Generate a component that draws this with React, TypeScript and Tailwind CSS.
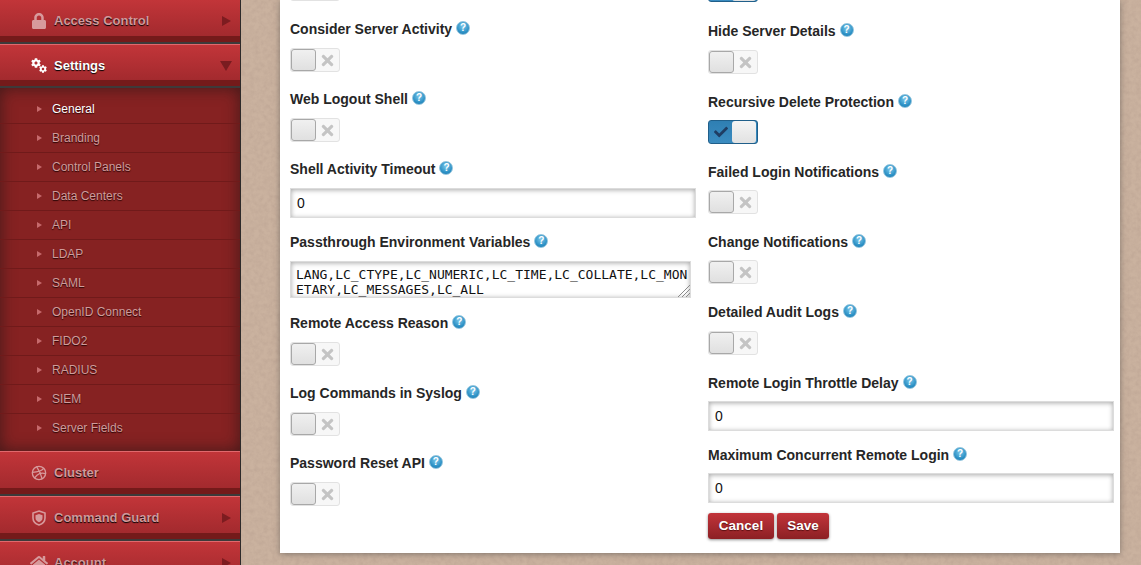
import { FaCheck, FaCog, FaHome, FaLock, FaTimes } from "react-icons/fa";
import { FiDribbble } from "react-icons/fi";

const subItems = [
  "General",
  "Branding",
  "Control Panels",
  "Data Centers",
  "API",
  "LDAP",
  "SAML",
  "OpenID Connect",
  "FIDO2",
  "RADIUS",
  "SIEM",
  "Server Fields",
];

function NavHeader({
  icon,
  label,
  open,
  arrow = true,
}: {
  icon: React.ReactNode;
  label: string;
  open?: boolean;
  arrow?: boolean;
}) {
  return (
    <div
      className={`shrink-0 border-t border-[#e0696d] border-b-2 border-b-[#3d3a3a] bg-[linear-gradient(#c23539,#a32a2e_85%,#741a1a_85%)] flex items-center ${open ? "h-[44px]" : "h-[45px] pb-[1px]"}`}
    >
      <div
        className={`w-[18px] ml-[30px] h-[20px] flex items-center justify-center ${open ? "text-white" : "text-[#d79a9c]"}`}
      >
        {icon}
      </div>
      <span
        className={`ml-[6px] text-[13px] font-bold [text-shadow:0_1px_1px_#000] ${open ? "text-white" : "text-[#d0999b]"}`}
      >
        {label}
      </span>
      {arrow && (
        <span className="ml-auto mr-[9px]">
          {open ? (
            <span className="block mr-[-1px] w-0 h-0 border-x-[6px] border-x-transparent border-t-[10px] border-t-[#7a1c20]" />
          ) : (
            <span className="block w-0 h-0 border-y-[5px] border-y-transparent border-l-[9px] border-l-[#7d1c20]" />
          )}
        </span>
      )}
    </div>
  );
}

function ShieldIcon() {
  return (
    <svg width="14" height="16" viewBox="0 0 14 16" fill="none">
      <path d="M7 1 L13 3 V8 C13 11.5 10 14 7 15 C4 14 1 11.5 1 8 V3 Z" stroke="currentColor" strokeWidth="1.6" />
      <path d="M7 4 L10.5 5.2 V8 C10.5 10 9 11.5 7 12.3 C5 11.5 3.5 10 3.5 8 V5.2 Z" fill="currentColor" />
    </svg>
  );
}

function Sidebar() {
  return (
    <div className="relative z-10 w-[241px] shrink-0 h-[566px] overflow-hidden border-r border-[#2d2a2a] flex flex-col mt-[-1px]">
      <NavHeader label="Access Control" icon={<FaLock size={16} />} />
      <NavHeader
        label="Settings"
        open
        icon={
          <span className="flex w-[16px] h-[15px]">
            <FaCog size={10} className="self-start" />
            <FaCog size={8} className="self-end ml-[-2px]" />
          </span>
        }
      />
      <div className="shrink-0 h-[363px] pt-[7px] bg-[#862222] shadow-[inset_0_0_16px_rgba(20,20,20,0.6)]">
        {subItems.map((item, i) => (
          <div
            key={item}
            className={`h-[29px] flex items-center pl-[37px] border-b ${i < subItems.length - 1 ? "border-[#701a1a]" : "border-transparent"}`}
          >
            <span className="w-0 h-0 border-y-[3px] border-y-transparent border-l-[5px] border-l-[#c66a6c]" />
            <span
              className={`ml-[10px] text-[12px] [text-shadow:0_1px_1px_#2a0505] ${i === 0 ? "text-white" : "text-[#cf9c9c]"}`}
            >
              {item}
            </span>
          </div>
        ))}
      </div>
      <NavHeader label="Cluster" arrow={false} icon={<FiDribbble size={16} />} />
      <NavHeader label="Command Guard" icon={<ShieldIcon />} />
      <NavHeader label="Account" icon={<FaHome size={18} />} />
    </div>
  );
}

function Help() {
  return (
    <span className="ml-[4px] w-[14px] h-[14px] mt-[-3px] rounded-full bg-[radial-gradient(circle_at_50%_35%,#7cc8ea,#2a8fc4_65%,#1a6fa5)] border border-[#8fc3dd] inline-flex items-center justify-center text-[10px] leading-none font-bold text-white">
      ?
    </span>
  );
}

function Label({ text, className = "mb-[9px]" }: { text: string; className?: string }) {
  return (
    <div className={`h-[20px] flex items-center text-[14px] font-bold text-[#262626] ${className}`}>
      {text}
      <Help />
    </div>
  );
}

function Toggle({ on, className = "" }: { on?: boolean; className?: string }) {
  if (on) {
    return (
      <div
        className={`w-[50px] h-[24px] rounded-[3px] border border-[#205f8a] bg-[linear-gradient(#2f7fb3,#3b8cc0)] flex items-center p-[1px] ${className}`}
      >
        <FaCheck size={14} className="ml-[4px] text-[#1f3d63]" />
        <span className="ml-auto w-[24px] h-[22px] rounded-[3px] bg-[linear-gradient(#f4f4f4,#e2e2e2)]" />
      </div>
    );
  }
  return (
    <div
      className={`w-[50px] h-[24px] rounded-[3px] border border-[#e2e2e2] bg-[#f7f7f7] flex items-center ${className}`}
    >
      <span className="w-[25px] h-[22px] rounded-[3px] border border-[#a8a8a8] bg-[linear-gradient(#f0f0f0,#e0e0e0)]" />
      <FaTimes size={17} className="ml-[3px] text-[#c4c4c4]" />
    </div>
  );
}

function TextInput({ className = "" }: { className?: string }) {
  return (
    <div
      className={`w-[406px] h-[30px] border border-[#dcdcdc] bg-white shadow-[inset_0_1px_5px_rgba(0,0,0,0.35)] flex items-center pl-[6px] pt-[1px] text-[14px] text-[#111] ${className}`}
    >
      0
    </div>
  );
}

function Button({ label, width }: { label: string; width: string }) {
  return (
    <button
      className={`h-[26px] ${width} rounded-[3px] bg-[linear-gradient(#c2343a,#8c2024)] text-[13.5px] font-bold text-white shadow-[0_1px_3px_rgba(0,0,0,0.45)] [text-shadow:0_1px_1px_#5a1012]`}
    >
      {label}
    </button>
  );
}

function LeftColumn() {
  return (
    <div className="w-[406px] mt-[-23px]">
      <Toggle className="mb-[18px]" />
      <Label text="Consider Server Activity" />
      <Toggle className="mb-[17px]" />
      <Label text="Web Logout Shell" />
      <Toggle className="mb-[17px]" />
      <Label text="Shell Activity Timeout" />
      <TextInput className="mb-[14px]" />
      <Label text="Passthrough Environment Variables" />
      <div className="relative w-[401px] h-[37px] mb-[15px]">
        <textarea
          readOnly
          className="block resize-none w-full h-full border border-[#dcdcdc] bg-white shadow-[inset_0_1px_5px_rgba(0,0,0,0.35)] pl-[5px] pr-[2px] pt-[5px] font-['DejaVu_Sans_Mono',monospace] text-[13px] leading-[15px] text-[#111] overflow-hidden"
          defaultValue="LANG,LC_CTYPE,LC_NUMERIC,LC_TIME,LC_COLLATE,LC_MONETARY,LC_MESSAGES,LC_ALL"
        />
        <svg className="absolute right-[1px] bottom-[1px]" width="13" height="13" viewBox="0 0 13 13" stroke="#8a8a8a">
          <path d="M1 13 L13 1 M5 13 L13 5 M9 13 L13 9" />
        </svg>
      </div>
      <Label text="Remote Access Reason" />
      <Toggle className="mb-[17px]" />
      <Label text="Log Commands in Syslog" />
      <Toggle className="mb-[17px]" />
      <Label text="Password Reset API" />
      <Toggle />
    </div>
  );
}

function RightColumn() {
  return (
    <div className="w-[406px] mt-[-22px]">
      <Toggle on className="mb-[19px]" />
      <Label text="Hide Server Details" />
      <Toggle className="mb-[18px]" />
      <Label text="Recursive Delete Protection" className="mb-[8px]" />
      <Toggle on className="mb-[18px]" />
      <Label text="Failed Login Notifications" className="mb-[8px]" />
      <Toggle className="mb-[18px]" />
      <Label text="Change Notifications" className="mb-[8px]" />
      <Toggle className="mb-[18px]" />
      <Label text="Detailed Audit Logs" />
      <Toggle className="mb-[18px]" />
      <Label text="Remote Login Throttle Delay" className="mb-[8px]" />
      <TextInput className="mb-[14px]" />
      <Label text="Maximum Concurrent Remote Login" className="mb-[8px]" />
      <TextInput className="mb-[10px]" />
      <div className="flex gap-[3px]">
        <Button label="Cancel" width="w-[66px]" />
        <Button label="Save" width="w-[52px]" />
      </div>
    </div>
  );
}

export default function App() {
  return (
    <div className="relative h-[565px] overflow-hidden bg-[#cab29f] font-['Liberation_Sans',Arial,sans-serif] flex">
      <svg className="absolute inset-0 w-full h-full" aria-hidden="true">
        <filter id="paper">
          <feTurbulence type="fractalNoise" baseFrequency="0.22" numOctaves="4" seed="7" />
          <feColorMatrix values="0 0 0 0 0.42  0 0 0 0 0.30  0 0 0 0 0.24  0.4 0.4 0 0 -0.3" />
        </filter>
        <rect width="100%" height="100%" filter="url(#paper)" />
      </svg>
      <Sidebar />
      <div className="relative ml-[39px] w-[840px] h-[553px] bg-white shadow-[0_1px_6px_rgba(60,60,60,0.5)] overflow-hidden flex gap-[12px] px-[10px]">
        <LeftColumn />
        <RightColumn />
      </div>
    </div>
  );
}
